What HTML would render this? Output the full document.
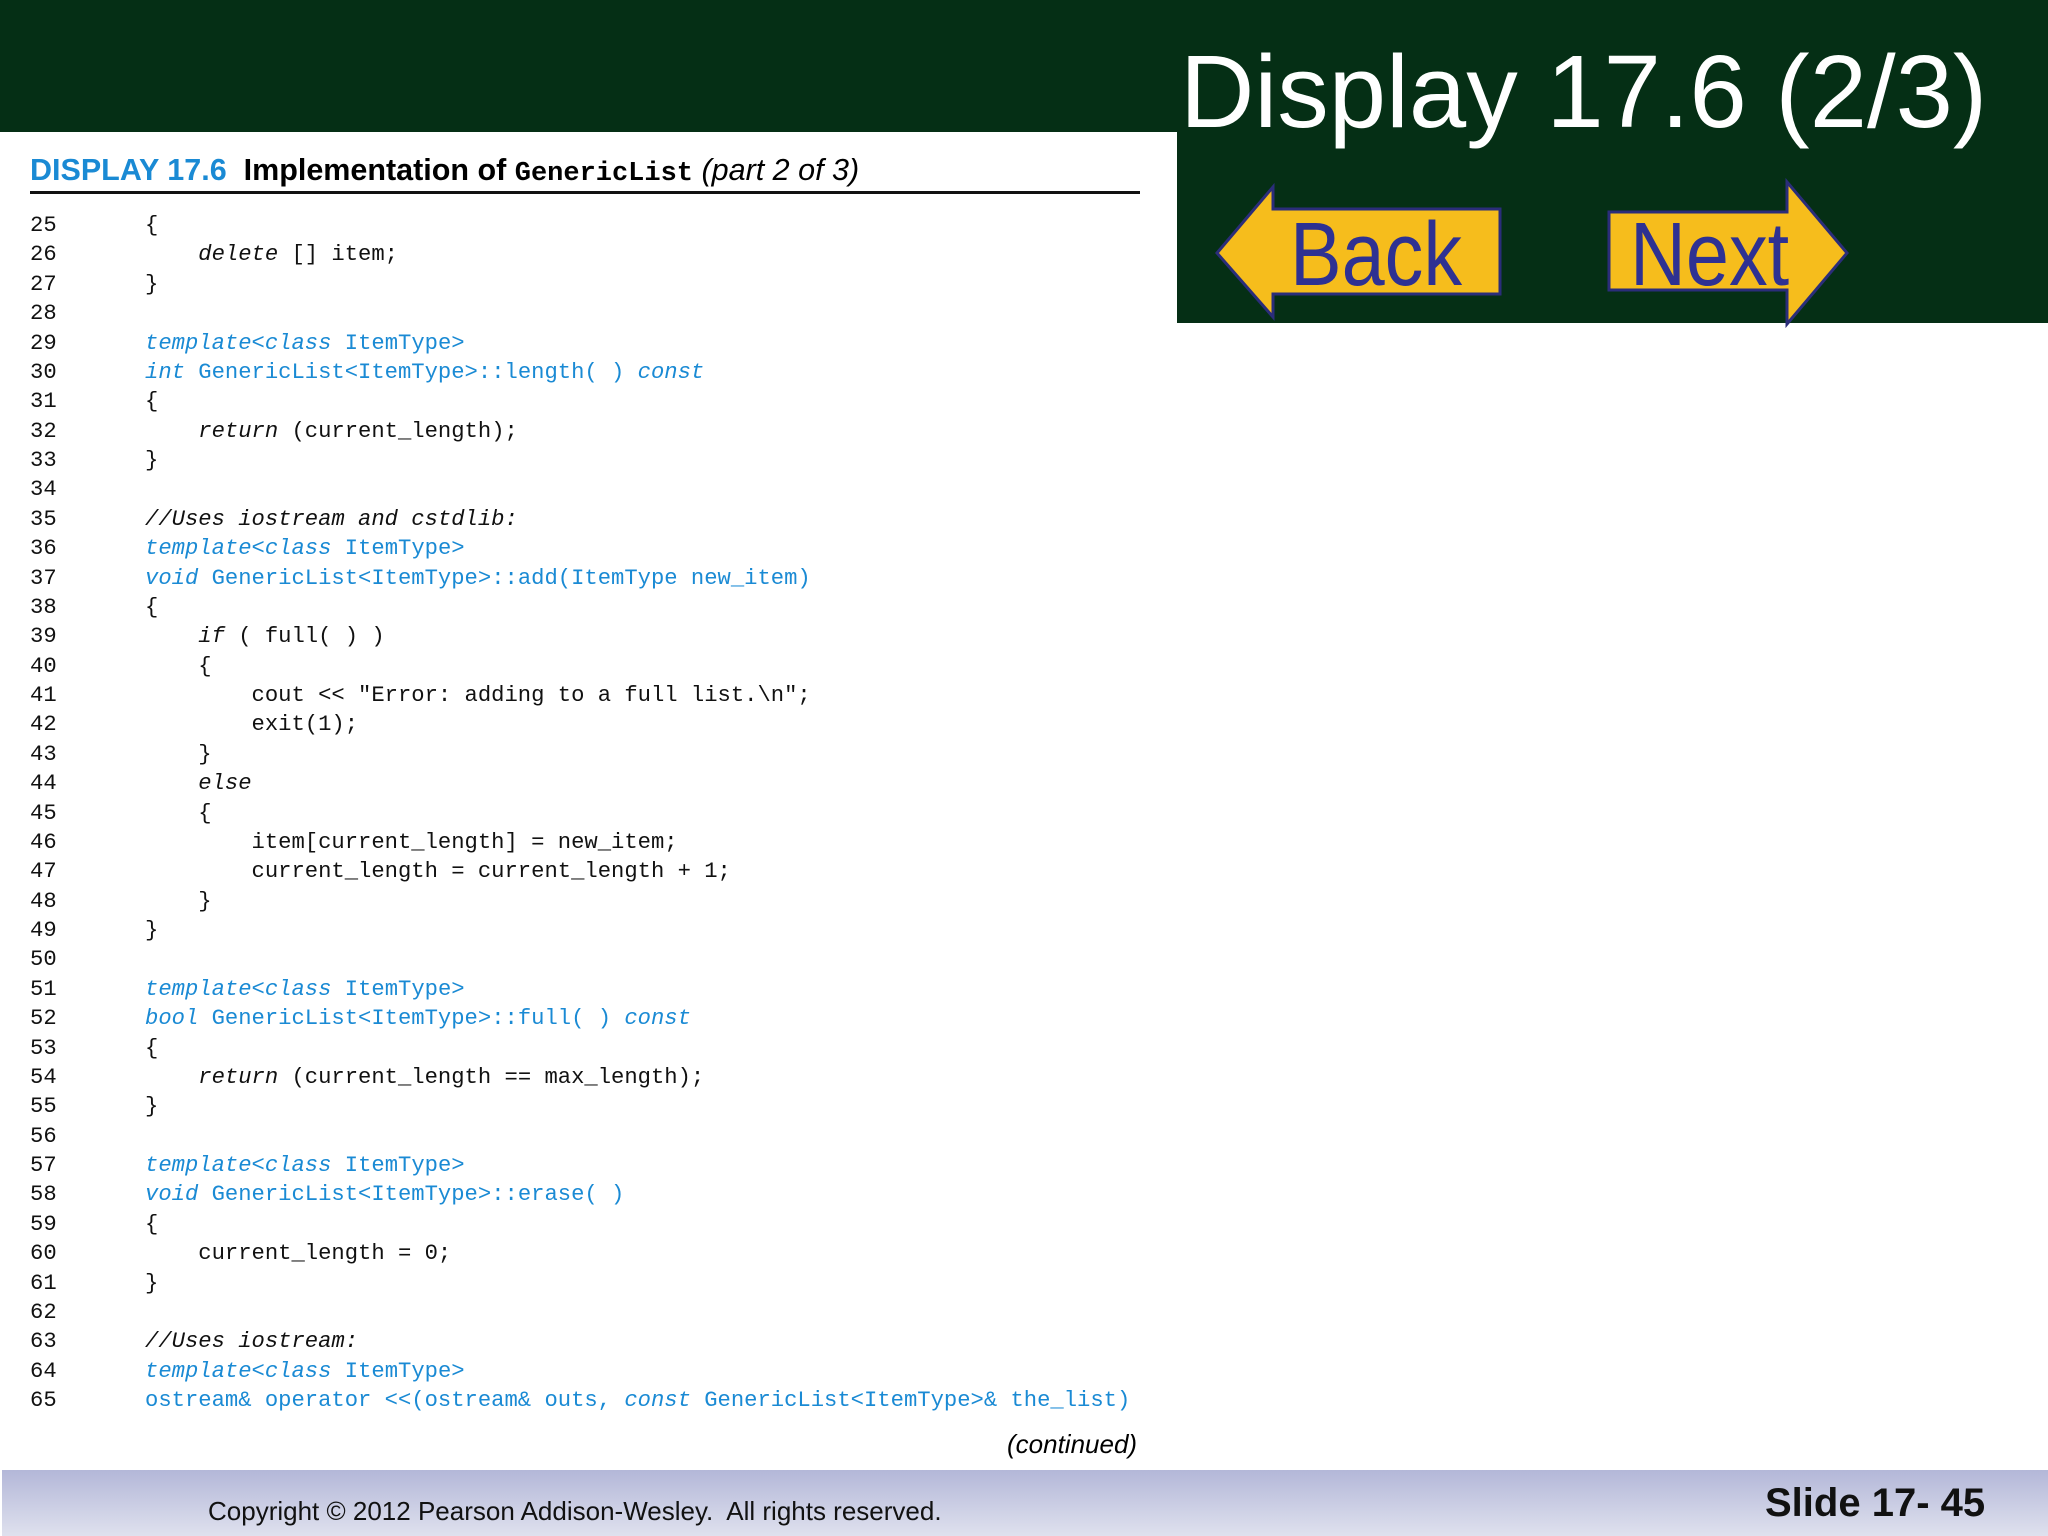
<!DOCTYPE html>
<html><head><meta charset="utf-8"><style>
*{margin:0;padding:0}
body{width:2048px;height:1536px;position:relative;background:#fff;overflow:hidden;font-family:"Liberation Sans",sans-serif}
.top{position:absolute;left:0;top:0;width:2048px;height:132px;background:#052f15}
.panel{position:absolute;left:1177px;top:0;width:871px;height:323px;background:#052f15}
.title{position:absolute;left:1180px;top:40px;font-size:103px;color:#fff;white-space:nowrap;line-height:1}
pre{position:absolute;top:211px;font-family:"Liberation Mono",monospace;font-size:22.2px;line-height:29.38px;color:#111}
.b{color:#1a8ad4}
i{font-style:italic}
.hdr{position:absolute;left:30px;top:152px;white-space:nowrap;font-size:30.5px;line-height:36px}
.rule{position:absolute;left:30px;top:191px;width:1110px;height:3px;background:#111}
.foot{position:absolute;left:2px;top:1470px;width:2046px;height:66px;background:linear-gradient(#b3b7d8,#dfe1ee)}
.lbl{position:absolute;font-size:90px;color:#2e3192;line-height:1;transform-origin:left top;transform:scaleX(0.86)}
</style></head><body>
<div class="top"></div>
<div class="panel"></div>
<div class="title">Display 17.6 (2/3)</div>
<svg style="position:absolute;left:0;top:0" width="2048" height="340">
<polygon points="1217,253 1273,187 1273,209 1500,209 1500,294 1273,294 1273,317" fill="#f6bd1c" stroke="#2b2d7a" stroke-width="3"/>
<polygon points="1609,212 1787,212 1787,182 1847,253 1787,324 1787,290 1609,290" fill="#f6bd1c" stroke="#2b2d7a" stroke-width="3"/>
</svg>
<div class="lbl" style="left:1290px;top:210px">Back</div>
<div class="lbl" style="left:1630px;top:210px">Next</div>
<div class="hdr"><b style="color:#1a8ad4">DISPLAY 17.6</b>&nbsp;&nbsp;<b>Implementation of</b> <span style="font-family:'Liberation Mono',monospace;font-weight:bold;font-size:27px">GenericList</span> <i>(part 2 of 3)</i></div>
<div class="rule"></div>
<pre style="left:30px">25
26
27
28
29
30
31
32
33
34
35
36
37
38
39
40
41
42
43
44
45
46
47
48
49
50
51
52
53
54
55
56
57
58
59
60
61
62
63
64
65</pre>
<pre style="left:145px">{
    <i>delete</i> [] item;
}

<span class="b"><i>template</i>&lt;<i>class</i> ItemType&gt;</span>
<span class="b"><i>int</i> GenericList&lt;ItemType&gt;::length( ) <i>const</i></span>
{
    <i>return</i> (current_length);
}

<i>//Uses iostream and cstdlib:</i>
<span class="b"><i>template</i>&lt;<i>class</i> ItemType&gt;</span>
<span class="b"><i>void</i> GenericList&lt;ItemType&gt;::add(ItemType new_item)</span>
{
    <i>if</i> ( full( ) )
    {
        cout &lt;&lt; "Error: adding to a full list.\n";
        exit(1);
    }
    <i>else</i>
    {
        item[current_length] = new_item;
        current_length = current_length + 1;
    }
}

<span class="b"><i>template</i>&lt;<i>class</i> ItemType&gt;</span>
<span class="b"><i>bool</i> GenericList&lt;ItemType&gt;::full( ) <i>const</i></span>
{
    <i>return</i> (current_length == max_length);
}

<span class="b"><i>template</i>&lt;<i>class</i> ItemType&gt;</span>
<span class="b"><i>void</i> GenericList&lt;ItemType&gt;::erase( )</span>
{
    current_length = 0;
}

<i>//Uses iostream:</i>
<span class="b"><i>template</i>&lt;<i>class</i> ItemType&gt;</span>
<span class="b">ostream&amp; operator &lt;&lt;(ostream&amp; outs, <i>const</i> GenericList&lt;ItemType&gt;&amp; the_list)</span></pre>
<div style="position:absolute;left:1007px;top:1429px;font-size:26px;font-style:italic;white-space:nowrap">(continued)</div>
<div class="foot"></div>
<div style="position:absolute;left:208px;top:1496px;font-size:26px;color:#111;white-space:nowrap">Copyright © 2012 Pearson Addison-Wesley.&nbsp; All rights reserved.</div>
<div style="position:absolute;left:1765px;top:1481px;font-size:40px;font-weight:bold;color:#111;white-space:nowrap">Slide 17- 45</div>
</body></html>
